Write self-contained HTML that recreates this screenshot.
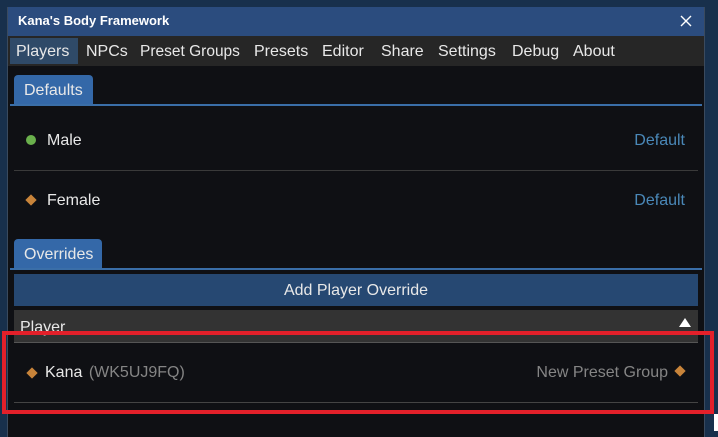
<!DOCTYPE html>
<html><head><style>
*{margin:0;padding:0;box-sizing:border-box}
body{width:718px;height:431px;background:#18304c;position:relative;overflow:hidden;font-family:"Liberation Sans",sans-serif;color:#e8e8e8}
.a{position:absolute}
.win{left:7px;top:7px;width:698px;height:430px;background:#0f1014;border-left:1px solid #3a4a5e;border-right:1px solid #3a4a5e}
.t{font-size:15px;line-height:20px;white-space:nowrap}
.dia{width:8px;height:8px;background:#c8843a;transform:rotate(45deg)}
.sep{height:1px;background:#3a3a3a}
</style></head><body>
<div class="a win"></div>
<div class="a" style="left:8px;top:7px;width:696px;height:29px;background:#2b4c7e"></div>
<div class="a" style="left:18px;top:13px;font-size:13px;font-weight:bold;color:#fff">Kana's Body Framework</div>
<svg class="a" style="left:680px;top:15px" width="12" height="12"><path d="M1 1L11 11M11 1L1 11" stroke="#fff" stroke-width="1.4"/></svg>
<div class="a" style="left:8px;top:36px;width:696px;height:30px;background:#262626"></div>
<div class="a" style="left:10px;top:38px;width:68px;height:26px;background:#2f4a68"></div>
<div class="a t" style="top:42px;left:16px;font-size:16px">Players</div>
<div class="a t" style="top:42px;left:86px;font-size:16px">NPCs</div>
<div class="a t" style="top:42px;left:140px;font-size:15.5px">Preset Groups</div>
<div class="a t" style="top:42px;left:254px;font-size:16px">Presets</div>
<div class="a t" style="top:42px;left:322px;font-size:16px">Editor</div>
<div class="a t" style="top:42px;left:381px;font-size:16px">Share</div>
<div class="a t" style="top:42px;left:438px;font-size:16px">Settings</div>
<div class="a t" style="top:42px;left:512px;font-size:16px">Debug</div>
<div class="a t" style="top:42px;left:573px;font-size:16px">About</div>

<div class="a" style="left:14px;top:75px;width:79px;height:30px;background:#3468a8;border-radius:4px 4px 0 0"></div>
<div class="a t" style="left:24px;top:81px;font-size:16px">Defaults</div>
<div class="a" style="left:10px;top:104px;width:692px;height:2px;background:#3a6ea8"></div>

<div class="a" style="left:26px;top:135px;width:10px;height:10px;border-radius:50%;background:#6ab04c"></div>
<div class="a t" style="left:47px;top:131px;font-size:16px">Male</div>
<div class="a t" style="right:33px;top:131px;color:#4a88b8;font-size:16px">Default</div>
<div class="a sep" style="left:14px;top:170px;width:684px"></div>
<div class="a dia" style="left:27px;top:196px"></div>
<div class="a t" style="left:47px;top:191px;font-size:16px">Female</div>
<div class="a t" style="right:33px;top:191px;color:#4a88b8;font-size:16px">Default</div>

<div class="a" style="left:14px;top:239px;width:88px;height:30px;background:#3468a8;border-radius:4px 4px 0 0"></div>
<div class="a t" style="left:24px;top:245px;font-size:16px">Overrides</div>
<div class="a" style="left:10px;top:268px;width:692px;height:2px;background:#3a6ea8"></div>

<div class="a" style="left:14px;top:274px;width:684px;height:32px;background:#264872"></div>
<div class="a t" style="left:14px;width:684px;text-align:center;top:281px;font-size:16px">Add Player Override</div>

<div class="a" style="left:14px;top:310px;width:684px;height:32px;background:#333"></div>
<div class="a t" style="left:20px;top:318px;font-size:16px">Player</div>
<svg class="a" style="left:679px;top:318px" width="12" height="9"><path d="M6 0L12 9H0Z" fill="#fff"/></svg>
<div class="a" style="left:14px;top:342px;width:684px;height:1px;background:#555"></div>

<div class="a dia" style="left:28px;top:369px"></div>
<div class="a t" style="left:45px;top:363px;font-size:16px">Kana <span style="color:#858585;margin-left:2px">(WK5UJ9FQ)</span></div>
<div class="a t" style="right:50px;top:363px;color:#858585;font-size:16px">New Preset Group</div>
<div class="a dia" style="left:676px;top:367px"></div>
<div class="a sep" style="left:14px;top:402px;width:684px;background:#444"></div>

<div class="a" style="left:2px;top:331px;width:712px;height:83px;border:4px solid #e3202a"></div>
<div class="a" style="left:714px;top:414px;width:4px;height:17px;background:#fff"></div>
</body></html>
